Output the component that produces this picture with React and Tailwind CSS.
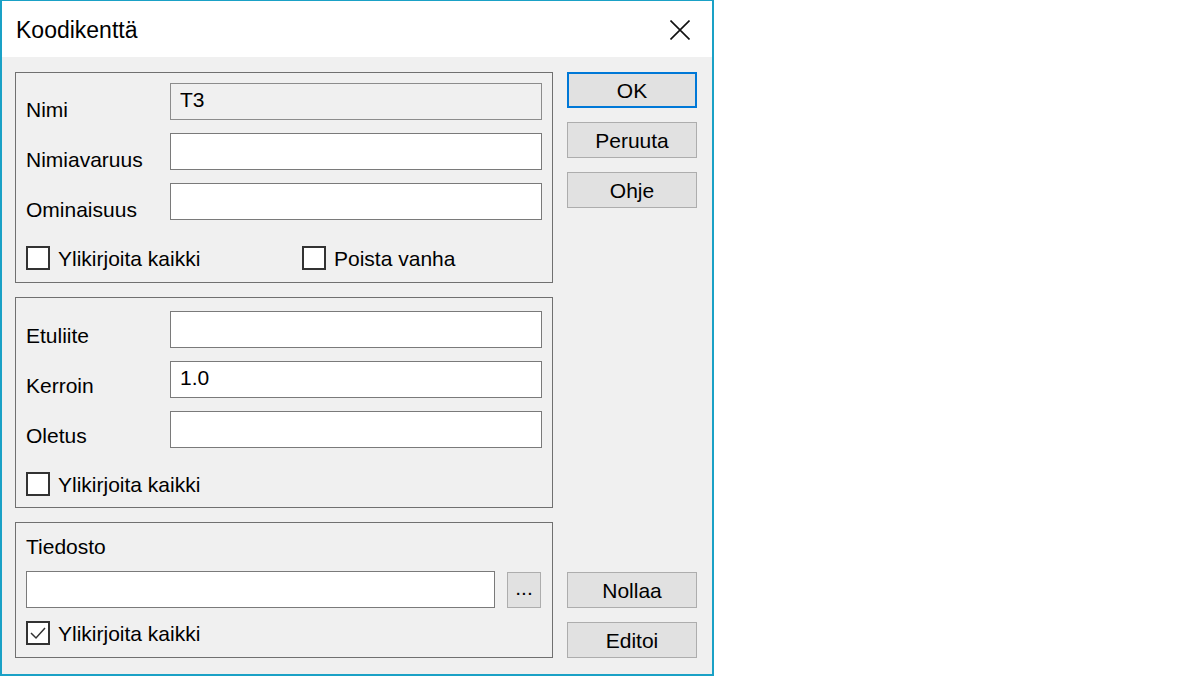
import React from "react";

const Checkbox = ({ label, checked = false, className = "" }) => (
  <div className={`flex items-center h-[24px] ${className}`}>
    <div className="w-[24px] h-[24px] border-2 border-[#333333] bg-white flex items-center justify-center shrink-0">
      {checked && (
        <svg width="20" height="20" viewBox="0 0 20 20">
          <polyline points="3,10 8,15 17,5" fill="none" stroke="#333333" strokeWidth="1.5" />
        </svg>
      )}
    </div>
    <span className="ml-[8px] leading-[24px] pt-[1px]">{label}</span>
  </div>
);

const Field = ({ label, value = "", disabled = false, labelTop = "mt-[15px]" }) => (
  <div className="flex items-start h-[37px]">
    <div className={`w-[144px] leading-[24px] ${labelTop}`}>{label}</div>
    <input
      readOnly
      value={value}
      className={`w-[372px] h-[37px] border px-[9px] pb-[4px] outline-none text-[21px] text-black ${
        disabled ? "bg-[#f0f0f0] border-[#8c8c8c]" : "bg-white border-[#7a7a7a]"
      }`}
    />
  </div>
);

const Button = ({ children, primary = false, className = "" }) => (
  <button
    className={`w-[130px] h-[36px] bg-[#e1e1e1] flex items-center justify-center leading-[24px] pt-[1px] ${
      primary ? "border-2 border-[#0078d7]" : "border border-[#adadad]"
    } ${className}`}
  >
    {children}
  </button>
);

export default function App() {
  return (
    <div className="w-[1200px] h-[676px] bg-white flex font-['Liberation_Sans',Arial,sans-serif] text-[21px] text-black">
      <div className="w-[714px] h-[676px] border-x-2 border-b-2 border-t border-[#1aa1c6] flex flex-col bg-[#f0f0f0]">
        {/* title bar */}
        <div className="h-[56px] bg-white flex items-center justify-between pl-[14px] pr-[22px]">
          <span className="text-[23px] pt-[3px]">Koodikenttä</span>
          <svg width="20" height="20" viewBox="0 0 20 20" className="mt-[2px]">
            <path d="M0.5 0.5 L19.5 19.5 M19.5 0.5 L0.5 19.5" stroke="#111111" strokeWidth="1.6" />
          </svg>
        </div>

        {/* body */}
        <div className="flex gap-[14px] pl-[13px] pt-[15px]">
          <div className="flex flex-col gap-[14px] w-[538px]">
            {/* group 1 */}
            <div className="h-[211px] border border-[#707070] px-[10px] pt-[10px] flex flex-col">
              <div className="flex flex-col gap-[13px]">
                <Field label="Nimi" value="T3" disabled />
                <Field label="Nimiavaruus" />
                <Field label="Ominaisuus" />
              </div>
              <div className="flex mt-[26px]">
                <Checkbox label="Ylikirjoita kaikki" className="w-[276px]" />
                <Checkbox label="Poista vanha" />
              </div>
            </div>

            {/* group 2 */}
            <div className="h-[211px] border border-[#707070] px-[10px] pt-[13px] flex flex-col">
              <div className="flex flex-col gap-[13px]">
                <Field label="Etuliite" labelTop="mt-[13px]" />
                <Field label="Kerroin" value="1.0" labelTop="mt-[13px]" />
                <Field label="Oletus" labelTop="mt-[13px]" />
              </div>
              <Checkbox label="Ylikirjoita kaikki" className="mt-[24px]" />
            </div>

            {/* group 3 */}
            <div className="h-[136px] border border-[#707070] px-[10px] flex flex-col">
              <div className="leading-[24px] mt-[12px]">Tiedosto</div>
              <div className="flex items-center mt-[12px] h-[37px]">
                <input readOnly value="" className="w-[469px] h-[37px] bg-white border border-[#7a7a7a] outline-none" />
                <button className="ml-[12px] w-[34px] h-[36px] bg-[#e1e1e1] border border-[#adadad] leading-[24px] pb-[4px]">
                  ...
                </button>
              </div>
              <Checkbox label="Ylikirjoita kaikki" checked className="mt-[13px]" />
            </div>
          </div>

          {/* buttons */}
          <div className="flex flex-col gap-[14px] w-[130px]">
            <Button primary>OK</Button>
            <Button>Peruuta</Button>
            <Button>Ohje</Button>
            <Button className="mt-auto">Nollaa</Button>
            <Button>Editoi</Button>
          </div>
        </div>
      </div>
    </div>
  );
}
